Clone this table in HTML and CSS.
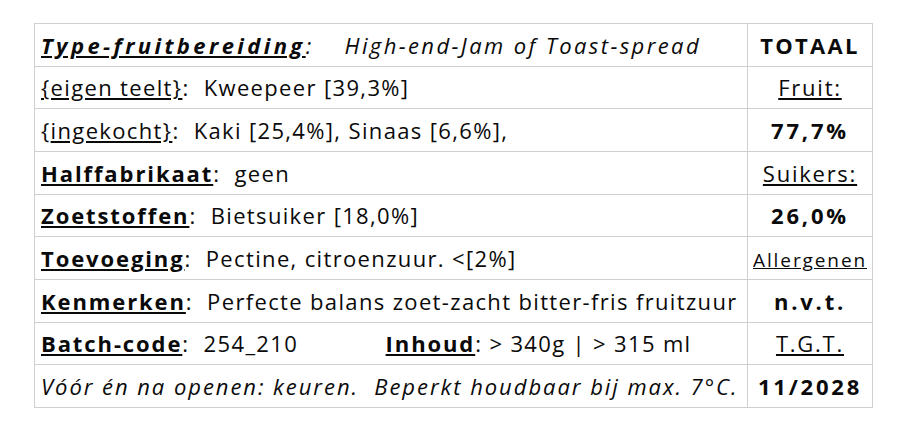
FILE: index.html
```html
<!DOCTYPE html>
<html lang="nl">
<head>
<meta charset="UTF-8">
<meta name="viewport" content="width=device-width, initial-scale=1.0">
<link rel="stylesheet" href="styles.css">
<title>Etiket</title>
</head>
<body>
<table class="label">
<colgroup>
<col class="col-main">
<col class="col-side">
</colgroup>
<tr>
<td class="main"><span class="key it title">Type-fruitbereiding</span><span class="it">:</span><span class="it sub">High-end-Jam of Toast-spread</span></td>
<td class="side"><b class="hd">TOTAAL</b></td>
</tr>
<tr>
<td class="main"><u>{eigen teelt}</u>:&nbsp; Kweepeer [39,3%]</td>
<td class="side"><u class="sp">Fruit:</u></td>
</tr>
<tr>
<td class="main">{<u>ingekocht}</u>:&nbsp; Kaki [25,4%], Sinaas [6,6%],</td>
<td class="side"><b class="num">77,7%</b></td>
</tr>
<tr>
<td class="main"><span class="key">Halffabrikaat</span>:&nbsp; geen</td>
<td class="side"><u class="sp">Suikers:</u></td>
</tr>
<tr>
<td class="main"><span class="key">Zoetstoffen</span>:&nbsp; Bietsuiker [18,0%]</td>
<td class="side"><b class="num">26,0%</b></td>
</tr>
<tr>
<td class="main"><span class="key">Toevoeging</span>:&nbsp; Pectine, citroenzuur. &lt;[2%]</td>
<td class="side"><u class="small">Allergenen</u></td>
</tr>
<tr>
<td class="main"><span class="key">Kenmerken</span>:&nbsp; Perfecte balans zoet-zacht bitter-fris fruitzuur</td>
<td class="side"><b class="num">n.v.t.</b></td>
</tr>
<tr>
<td class="main"><span class="key">Batch-code</span>:&nbsp; <span class="batch">254_210</span><span class="key">Inhoud</span>: &gt; 340g | &gt; 315 ml</td>
<td class="side"><u class="sp">T.G.T.</u></td>
</tr>
<tr>
<td class="main it note">Vóór én na openen: keuren.&nbsp; Beperkt houdbaar bij max. 7°C.</td>
<td class="side"><b class="num">11/2028</b></td>
</tr>
</table>
</body>
</html>
```
FILE: styles.css
```css
html,
body {
margin: 0;
background: #fff;
}
body {
padding: 23px 0 0 34px;
font-family: "Open Sans", "Noto Sans", sans-serif;
font-size: 22px;
color: #0a0a0a;
}
.label {
border-collapse: collapse;
table-layout: fixed;
width: 838px;
}
.col-main {
width: 713px;
}
.col-side {
width: 125px;
}
.label td {
border: 1px solid #d0d0d0;
height: 41.67px;
padding: 0 6px;
white-space: nowrap;
vertical-align: middle;
overflow: visible;
}
.main {
letter-spacing: 1.35px;
}
.label .side {
text-align: center;
padding: 0;
}
.key {
font-weight: bold;
text-decoration: underline;
letter-spacing: 1.9px;
}
.it {
font-style: italic;
}
.title {
letter-spacing: 3.4px;
}
.sub {
margin-left: 32px;
letter-spacing: 2.4px;
}
.note {
letter-spacing: 1.95px;
}
.batch {
display: inline-block;
width: 182px;
}
.hd {
letter-spacing: 2.3px;
}
.sp {
letter-spacing: 1.75px;
}
.num {
letter-spacing: 2.8px;
}
.small {
font-size: 19px;
letter-spacing: 1.9px;
}
```
